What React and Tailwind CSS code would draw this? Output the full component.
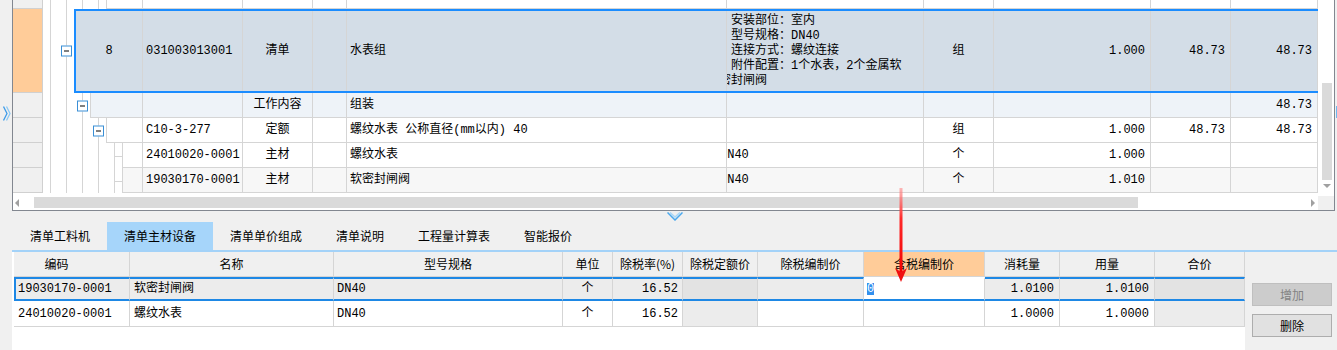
import React from "react";

const MONO = "font-['Liberation_Mono','Noto_Sans_CJK_SC',monospace]";
const SANS = "font-['Noto_Sans_CJK_SC','Noto_Sans',sans-serif]";

const topColCls = [
  "flex-1 min-w-0 justify-center",
  "w-[100px] pl-[3px]",
  "w-[70px] justify-center",
  "w-[34px]",
  "w-[380px] pl-[3px]",
  "w-[197px] pl-[4px]",
  "w-[70px] justify-center",
  "w-[157px] justify-end pr-[5px]",
  "w-[80px] justify-end pr-[5px]",
  "w-[87px] justify-end pr-[5px]",
];

function MinusBox() {
  return (
    <div className="absolute left-[2px] top-1/2 flex h-[11px] w-[11px] -translate-y-1/2 items-center justify-center border border-[#3a8fd6] bg-white">
      <div className="h-px w-[5px] bg-black" />
    </div>
  );
}

function Seg({ minus, connector }) {
  return (
    <div className="relative flex w-[16px] shrink-0">
      <div className="w-[7px]" />
      <div className="w-px bg-[#d5d5d5]" />
      {connector && <div className="absolute left-[8px] top-1/2 h-px w-[8px] bg-[#d5d5d5]" />}
      {minus && <MinusBox />}
    </div>
  );
}

function TopRow({ h, level, minus, connector, hdr, body, cells }) {
  const segs = [];
  for (let i = 1; i <= level; i++) {
    segs.push(<Seg key={i} minus={minus && i === level} connector={connector && i === level} />);
  }
  return (
    <div className={`flex shrink-0 ${h}`}>
      <div className={`w-[30px] shrink-0 border-b border-r border-[#d0d0d0] ${hdr}`} />
      {segs}
      <div className={`-ml-px flex min-w-0 flex-1 ${body}`}>
        {topColCls.map((c, i) => (
          <div
            key={i}
            className={`flex shrink-0 items-center overflow-hidden whitespace-nowrap border-r border-[#d5d5d5] ${c}`}
          >
            {cells[i]}
          </div>
        ))}
      </div>
    </div>
  );
}

const botW = [
  "w-[116px]",
  "w-[204px]",
  "w-[229px]",
  "w-[50px]",
  "w-[70px]",
  "w-[75px]",
  "w-[106px]",
  "w-[121px]",
  "w-[75px]",
  "w-[95px]",
  "w-[90px]",
];

function BCell({ i, className = "", children }) {
  return (
    <div
      className={`flex shrink-0 items-center overflow-hidden whitespace-nowrap border-r border-r-[#d5d5d5] ${botW[i]} ${className}`}
    >
      {children}
    </div>
  );
}

export default function App() {
  const sel = "border-t-2 border-b-2 border-t-[#1e88e5] border-b-[#1e88e5]";
  return (
    <div className="relative h-[350px] w-[1337px] overflow-hidden bg-[#f0f0f0] text-black">
      {/* top panel */}
      <div className="flex h-[211px]">
        <div className="w-[12px] shrink-0 pl-[3px] pt-[106px]">
          <svg width="8" height="15" viewBox="0 0 8 15">
            <polyline points="0.5,0.5 4,7.5 0.5,14.5" fill="none" stroke="#3d9be9" strokeWidth="1.3" />
            <polyline points="3.5,0.5 7,7.5 3.5,14.5" fill="none" stroke="#8cc8f3" strokeWidth="1.3" />
          </svg>
        </div>
        <div className="flex w-[1323px] shrink-0 flex-col border-x border-b border-[#828790]">
          <div className="flex h-[196px]">
            <div className={`flex h-full w-[1305px] flex-col overflow-hidden bg-white text-[12px] ${MONO}`}>
              <TopRow
                h="h-[25px] mt-[-16px]"
                level={4}
                hdr="bg-[#f0f0f0]"
                body="border-l border-b border-[#d5d5d5]"
                cells={["", "", "主材", "", "软接头", "", "个", "", "", ""]}
              />
              <TopRow
                h="h-[84px]"
                level={2}
                minus
                hdr="bg-[#ffcc99]"
                body="border-2 border-r-0 border-[#1a8cff] bg-[#d3dde7]"
                cells={[
                  "8",
                  "031003013001",
                  "清单",
                  "",
                  "水表组",
                  <div className="leading-[15px]">
                    <div>安装部位：室内</div>
                    <div>型号规格：DN40</div>
                    <div>连接方式：螺纹连接</div>
                    <div>附件配置：1个水表，2个金属软</div>
                    <div className="-ml-[12px]">密封闸阀</div>
                  </div>,
                  "组",
                  "1.000",
                  "48.73",
                  "48.73",
                ]}
              />
              <TopRow
                h="h-[25px]"
                level={3}
                minus
                hdr="bg-[#f0f0f0]"
                body="border-l border-b border-[#d5d5d5] bg-[#eef3f8]"
                cells={["", "", "工作内容", "", "组装", "", "", "", "", "48.73"]}
              />
              <TopRow
                h="h-[25px]"
                level={4}
                minus
                hdr="bg-[#f0f0f0]"
                body="border-l border-b border-[#d5d5d5] bg-white"
                cells={["", "C10-3-277", "定额", "", "螺纹水表 公称直径(mm以内) 40", "", "组", "1.000", "48.73", "48.73"]}
              />
              <TopRow
                h="h-[25px]"
                level={5}
                connector
                hdr="bg-[#f0f0f0]"
                body="border-l border-b border-[#d5d5d5] bg-white"
                cells={[
                  "",
                  "24010020-0001",
                  "主材",
                  "",
                  "螺纹水表",
                  <span className="-ml-[11px]">DN40</span>,
                  "个",
                  "1.000",
                  "",
                  "",
                ]}
              />
              <TopRow
                h="h-[25px]"
                level={5}
                connector
                hdr="bg-[#f0f0f0]"
                body="border-l border-b border-[#d5d5d5] bg-[#f7f7f7]"
                cells={[
                  "",
                  "19030170-0001",
                  "主材",
                  "",
                  "软密封闸阀",
                  <span className="-ml-[11px]">DN40</span>,
                  "个",
                  "1.010",
                  "",
                  "",
                ]}
              />
            </div>
            <div className="flex w-[16px] flex-col items-start bg-white pl-[4px] pt-[83px]">
              <div className="h-[97px] w-[10px] bg-[#dadada]" />
              <svg className="ml-px mt-[4px]" width="8" height="4" viewBox="0 0 8 4">
                <polygon points="0,0 8,0 4,4" fill="#a0a0a0" />
              </svg>
            </div>
          </div>
          <div className="flex h-[14px]">
            <div className="flex w-[1305px] items-start bg-white">
              <div className="flex h-full w-[21px] shrink-0 items-center pl-[2px]">
                <svg width="4" height="8" viewBox="0 0 4 8">
                  <polygon points="4,0 4,8 0,4" fill="#a0a0a0" />
                </svg>
              </div>
              <div className="mt-[1px] h-[11px] w-[1104px] shrink-0 bg-[#dadada]" />
              <div className="flex h-full flex-1 items-center justify-end pr-[3px]">
                <svg width="4" height="8" viewBox="0 0 4 8">
                  <polygon points="0,0 0,8 4,4" fill="#a0a0a0" />
                </svg>
              </div>
            </div>
            <div className="flex-1 bg-[#f0f0f0]" />
          </div>
        </div>
        <div className="w-[2px] shrink-0 pt-[106px]">
          <div className="ml-px h-[12px] w-px bg-[#6cb8ee]" />
        </div>
      </div>

      {/* bottom panel */}
      <div className="flex h-[139px]">
        <div className="w-[12px] shrink-0" />
        <div className="flex flex-1 flex-col">
          <div className="flex h-[11px] justify-center pt-[1px]">
            <svg width="16" height="9" viewBox="0 0 16 9">
              <polyline points="0.5,0.5 8,8 15.5,0.5" fill="none" stroke="#4aa8ee" strokeWidth="1.5" />
              <polyline points="3,0.5 8,5 13,0.5" fill="none" stroke="#a6d6f8" strokeWidth="1.5" />
            </svg>
          </div>
          <div className={`flex h-[28px] pl-px text-[12px] ${SANS}`}>
            <div className="flex items-center px-[17px]">清单工料机</div>
            <div className="flex items-center bg-[#a6d5fa] px-[17px]">清单主材设备</div>
            <div className="flex items-center px-[17px]">清单单价组成</div>
            <div className="flex items-center px-[17px]">清单说明</div>
            <div className="flex items-center px-[17px]">工程量计算表</div>
            <div className="flex items-center px-[17px]">智能报价</div>
          </div>
          <div className="h-[2px] bg-[#a3d2f8]" />
          <div className="flex flex-1">
            <div className="w-[1233px] shrink-0 bg-white pl-[2px]">
              <div className={`flex h-[25px] bg-[#f0f0f0] text-[12px] ${SANS}`}>
                {["编码", "名称", "型号规格", "单位", "除税率(%)", "除税定额价", "除税编制价", "含税编制价", "消耗量", "用量", "合价"].map(
                  (t, i) => (
                    <BCell
                      key={i}
                      i={i}
                      className={`justify-center border-b border-b-[#d5d5d5] ${i === 0 ? "pr-[30px]" : ""} ${
                        i === 7 ? "bg-[#ffcc99]" : ""
                      }`}
                    >
                      {t}
                    </BCell>
                  )
                )}
              </div>
              <div className={`flex h-[24px] text-[12px] ${MONO}`}>
                <BCell i={0} className={`${sel} border-l-2 border-l-[#1e88e5] bg-[#ececec] pl-[2px]`}>19030170-0001</BCell>
                <BCell i={1} className={`${sel} bg-[#ececec] pl-[4px]`}>软密封闸阀</BCell>
                <BCell i={2} className={`${sel} bg-[#ececec] pl-[3px]`}>DN40</BCell>
                <BCell i={3} className={`${sel} justify-center bg-[#ececec]`}>个</BCell>
                <BCell i={4} className={`${sel} justify-end bg-[#ececec] pr-[4px]`}>16.52</BCell>
                <BCell i={5} className={`${sel} bg-[#e3e3e3]`} />
                <BCell i={6} className={`${sel} bg-[#ececec]`} />
                <BCell i={7} className="border-t-2 border-b-2 border-t-white border-b-[#1e88e5] bg-white pl-[3px]">
                  <span className="bg-[#3390ee] leading-[12px] text-white">0</span>
                </BCell>
                <BCell i={8} className={`${sel} justify-end bg-[#ececec] pr-[5px]`}>1.0100</BCell>
                <BCell i={9} className={`${sel} justify-end bg-[#ececec] pr-[5px]`}>1.0100</BCell>
                <BCell i={10} className={`${sel} bg-[#e3e3e3]`} />
              </div>
              <div className={`flex h-[26px] border-b border-[#d5d5d5] text-[12px] ${MONO}`}>
                <BCell i={0} className="pl-[4px]">24010020-0001</BCell>
                <BCell i={1} className="pl-[4px]">螺纹水表</BCell>
                <BCell i={2} className="pl-[3px]">DN40</BCell>
                <BCell i={3} className="justify-center">个</BCell>
                <BCell i={4} className="justify-end pr-[4px]">16.52</BCell>
                <BCell i={5} className="bg-[#ececec]" />
                <BCell i={6} />
                <BCell i={7} />
                <BCell i={8} className="justify-end pr-[5px]">1.0000</BCell>
                <BCell i={9} className="justify-end pr-[5px]">1.0000</BCell>
                <BCell i={10} className="bg-[#ececec]" />
              </div>
            </div>
            <div className={`flex flex-1 flex-col pl-[7px] pt-[31px] text-[12px] ${SANS}`}>
              <div className="flex h-[23px] w-[80px] items-center justify-center border border-[#bfbfbf] bg-[#cccccc] text-[#838383]">
                增加
              </div>
              <div className="mt-[8px] flex h-[23px] w-[80px] items-center justify-center border border-[#adadad] bg-[#e1e1e1]">
                删除
              </div>
            </div>
          </div>
        </div>
      </div>

      {/* red annotation arrow */}
      <svg className="absolute left-[894px] top-[188px]" width="14" height="96" viewBox="0 0 14 96">
        <defs>
          <linearGradient id="ra" x1="0" y1="0" x2="0" y2="1">
            <stop offset="0" stopColor="#ff8a8a" stopOpacity="0.6" />
            <stop offset="0.35" stopColor="#ff2a2a" />
            <stop offset="1" stopColor="#f00000" />
          </linearGradient>
        </defs>
        <rect x="5.5" y="0" width="3" height="86" fill="url(#ra)" />
        <path d="M1 80 L7 84 L13 80 L7 94 Z" fill="#f01010" />
      </svg>
    </div>
  );
}
